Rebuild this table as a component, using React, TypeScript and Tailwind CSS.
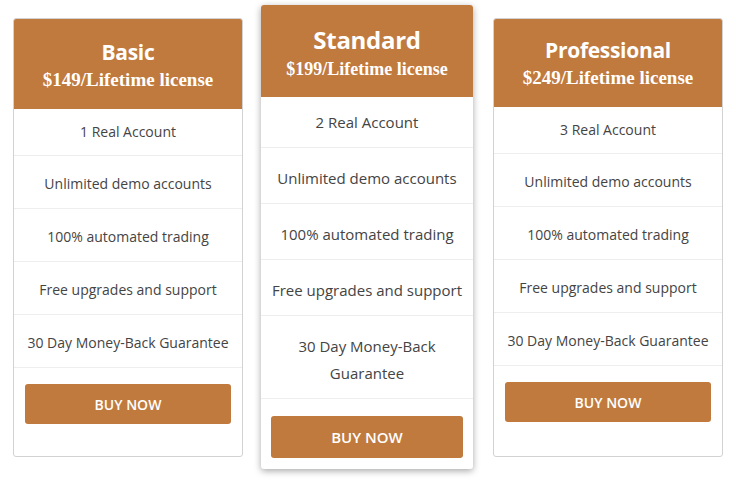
const plans = [
  {
    name: "Basic",
    price: "$149/Lifetime license",
    features: [
      "1 Real Account",
      "Unlimited demo accounts",
      "100% automated trading",
      "Free upgrades and support",
      "30 Day Money-Back Guarantee",
    ],
    featured: false,
  },
  {
    name: "Standard",
    price: "$199/Lifetime license",
    features: [
      "2 Real Account",
      "Unlimited demo accounts",
      "100% automated trading",
      "Free upgrades and support",
      "30 Day Money-Back Guarantee",
    ],
    featured: true,
  },
  {
    name: "Professional",
    price: "$249/Lifetime license",
    features: [
      "3 Real Account",
      "Unlimited demo accounts",
      "100% automated trading",
      "Free upgrades and support",
      "30 Day Money-Back Guarantee",
    ],
    featured: false,
  },
];

type Plan = (typeof plans)[number];

const PlanCard = ({ plan, last }: { plan: Plan; last?: boolean }) => {
  const big = plan.featured;
  return (
    <div
      className={
        big
          ? "w-[212px] h-[464px] flex flex-col bg-white rounded-[3px] overflow-hidden shadow-[0_2px_7px_rgba(0,0,0,0.35)]"
          : "w-[230px] h-[439px] mt-[13px] flex flex-col bg-white rounded-[3px] overflow-hidden border border-[#d2d2d2]"
      }
    >
      {/* HEADER */}
      <div
        className={
          big
            ? "bg-[#c07a3e] text-white text-center pt-[19px] pb-[15px]"
            : last
            ? "bg-[#c07a3e] text-white text-center pt-[16px] pb-[16px]"
            : "bg-[#c07a3e] text-white text-center pt-[18px] pb-[16px]"
        }
      >
        <div
          className={
            big
              ? "font-['Open_Sans',sans-serif] font-bold text-[24px] leading-[32px] tracking-[-0.3px]"
              : "font-['Open_Sans',sans-serif] font-bold text-[21px] leading-[30px] tracking-[-0.3px]"
          }
        >
          {plan.name}
        </div>
        <div
          className={
            big
              ? "font-['Liberation_Serif',serif] font-bold text-[18px] leading-[26px]"
              : "font-['Liberation_Serif',serif] font-bold text-[19px] leading-[26px]"
          }
        >
          {plan.price}
        </div>
      </div>

      {/* FEATURES */}
      <ul className="font-['Open_Sans',sans-serif] text-[#444]">
        {plan.features.map((f, i) => (
          <li
            key={f}
            className={
              big
                ? i === 0
                  ? "border-b border-[#eee] text-[15px] leading-[27px] px-[6px] h-[51px] flex items-center justify-center text-center"
                  : i === 4
                  ? "border-b border-[#eee] text-[15px] leading-[27px] px-8 pt-[5px] h-[83px] flex items-center justify-center text-center"
                  : "border-b border-[#eee] text-[15px] leading-[27px] px-[6px] pt-[5px] h-[56px] flex items-center justify-center text-center"
                : i === 0
                ? "border-b border-[#eee] text-[14px] leading-[26px] px-2 h-[47px] flex items-center justify-center text-center"
                : "border-b border-[#eee] text-[14px] leading-[26px] px-2 pt-[3px] h-[53px] flex items-center justify-center text-center"
            }
          >
            {f}
          </li>
        ))}
      </ul>

      {/* BUTTON */}
      <div className={big ? "px-[10px] pt-[17px]" : "px-[11px] pt-[16px]"}>
        <button
          className={
            big
              ? "w-full h-[42px] rounded-[3px] bg-[#c07a3e] text-white font-['Open_Sans',sans-serif] font-semibold text-[15px]"
              : "w-full h-[40px] rounded-[3px] bg-[#c07a3e] text-white font-['Open_Sans',sans-serif] font-semibold text-[14px]"
          }
        >
          BUY NOW
        </button>
      </div>
    </div>
  );
};

const App = () => {
  return (
    <div className="w-[736px] h-[481px] bg-white flex items-start pl-[13px] pt-[5px]">
      <PlanCard plan={plans[0]} />
      <div className="w-[18px]" />
      <PlanCard plan={plans[1]} />
      <div className="w-[20px]" />
      <PlanCard plan={plans[2]} last />
    </div>
  );
};

export default App;
